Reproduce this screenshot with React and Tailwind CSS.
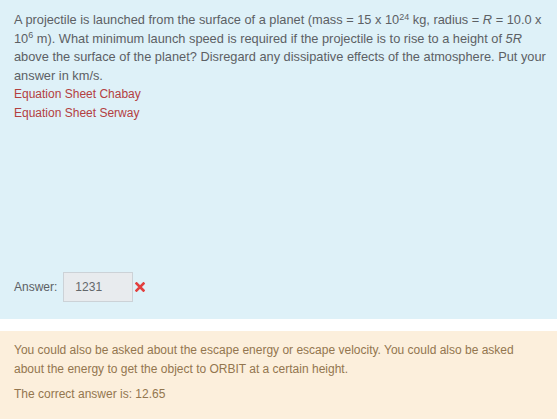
export default function App() {
  return (
    <div className="w-[557px] font-['Liberation_Sans',Arial,sans-serif] text-[12px] leading-[18.5px]">
      <div className="bg-[#def1f8] px-[14px] pt-[11px] h-[319px] flex flex-col text-[#5c6064]">
        <p className="text-[12.8px] whitespace-nowrap">
          A projectile is launched from the surface of a planet (mass = 15 x 10
          <sup className="text-[9px]">24</sup> kg, radius = <i>R</i> = 10.0 x
          <br />
          10<sup className="text-[9px]">6</sup> m). What minimum launch speed is required if the
          projectile is to rise to a height of <i>5R</i>
          <br />
          above the surface of the planet? Disregard any dissipative effects of the atmosphere. Put your
          <br />
          answer in km/s.
        </p>
        <a className="text-[#b3403f] self-start" href="#">
          Equation Sheet Chabay
        </a>
        <a className="text-[#b3403f] self-start" href="#">
          Equation Sheet Serway
        </a>
        <div className="flex items-center mt-[150px]">
          <span>Answer:</span>
          <div className="ml-[6px] w-[70px] h-[30px] bg-[#e8ebee] border border-[#ccd2d7] flex items-center pl-[11px] text-[#63676b]">
            1231
          </div>
          <svg className="ml-[2px]" width="10" height="10" viewBox="0 0 10 10">
            <path d="M1.5 1.5 L8.5 8.5 M8.5 1.5 L1.5 8.5" stroke="#e2403f" strokeWidth="2.6" strokeLinecap="square" />
          </svg>
        </div>
      </div>
      <div className="h-[12px]" />
      <div className="bg-[#fcefdc] px-[14px] pt-[10px] h-[88px] text-[#93764f] leading-[19px]">
        <p>
          You could also be asked about the escape energy or escape velocity. You could also be asked
          about the energy to get the object to ORBIT at a certain height.
        </p>
        <p className="mt-[6px]">The correct answer is: 12.65</p>
      </div>
    </div>
  );
}
